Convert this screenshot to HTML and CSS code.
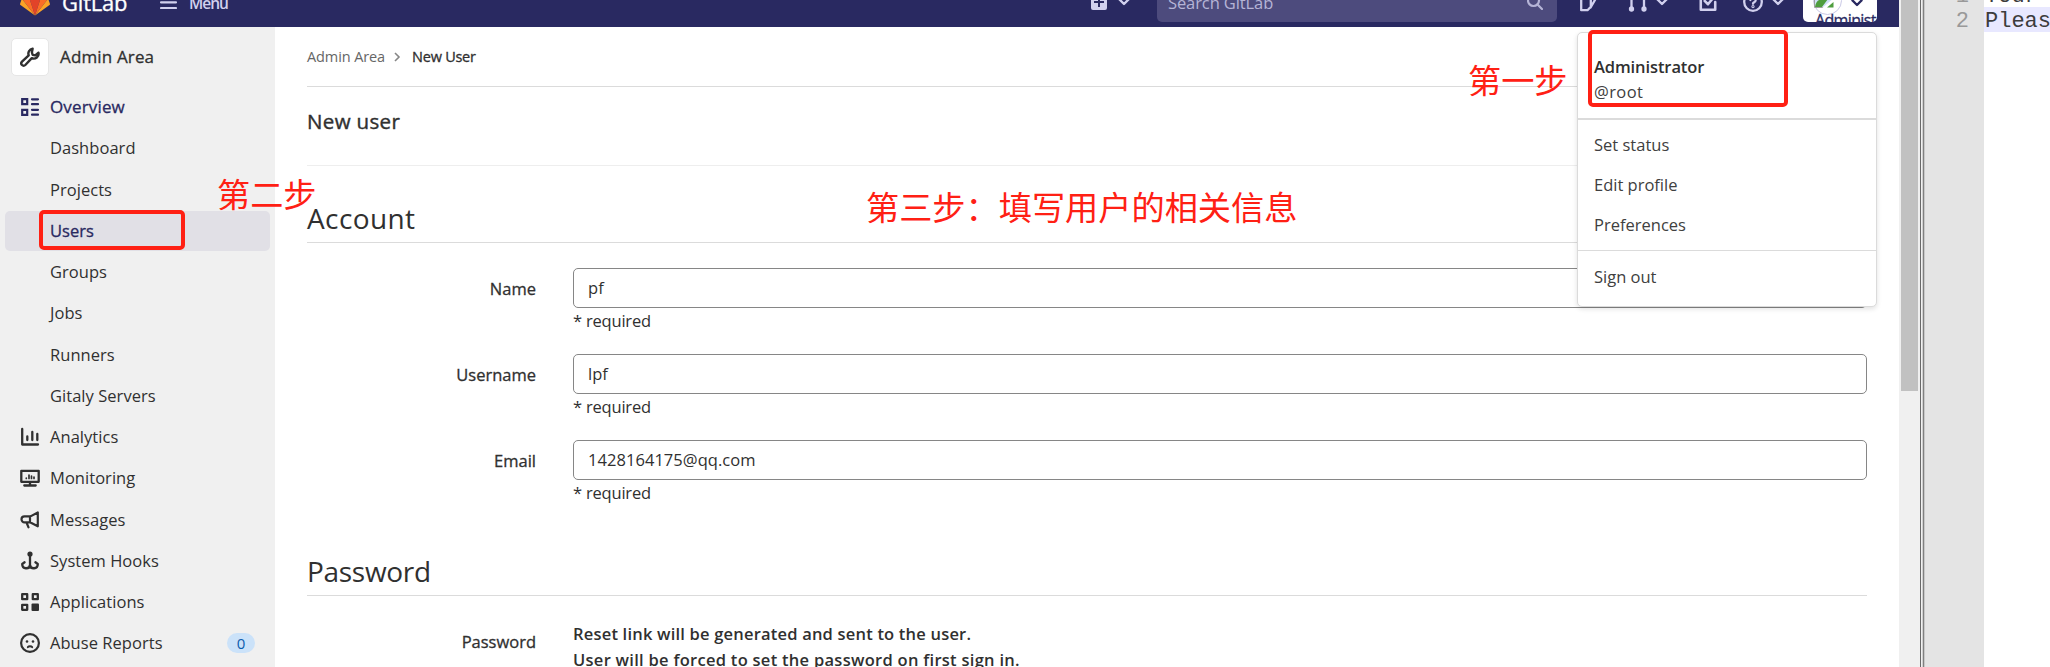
FILE: index.html
```
<!DOCTYPE html>
<html lang="en">
<head>
<meta charset="utf-8">
<title>New User · Admin Area · GitLab</title>
<link rel="stylesheet" href="styles.css">
</head>
<body>
<div class="app">
  <header class="topbar">
    <div class="topbar-inner">
      <svg class="logo" viewBox="0 0 30 28"><path fill="#e24329" d="M15 27.5 20.5 10.600h-11z"/><path fill="#fc6d26" d="M15 27.500 9.500 10.600H1.800zM15 27.500l5.500-16.900h7.700z"/><path fill="#fca326" d="M1.800 10.600.1 15.800a1.200 1.200 0 0 0 .4 1.300L15 27.500zM28.200 10.600l1.700 5.200a1.200 1.200 0 0 1-.4 1.300L15 27.500z"/><path fill="#e24329" d="M1.800 10.600h7.700L6.200.5c-.2-.5-.9-.5-1.100 0zM28.200 10.600h-7.700L23.800.5c.2-.5.900-.5 1.100 0z"/></svg>
      <span class="brand">GitLab</span>
      <svg class="burger" viewBox="0 0 17 15"><path d="M1 1.500h15M1 7.300h15M1 13h15" stroke="#d1d0ee" stroke-width="2.200" stroke-linecap="round"/></svg>
      <span class="menu-label">Menu</span>
      <svg class="ic plus" viewBox="0 0 16 16"><path fill="#d1d0ee" fill-rule="evenodd" d="M2 0h12a2 2 0 0 1 2 2v12a2 2 0 0 1-2 2H2a2 2 0 0 1-2-2V2a2 2 0 0 1 2-2zm5 3v4H3v2h4v4h2V9h4V7H9V3z"/></svg>
      <svg class="chev chev-a" viewBox="0 0 12 8"><path d="m1.500 1.500 4.500 4.500 4.500-4.500"/></svg>
      <div class="search"><span>Search GitLab</span>
        <svg class="ic glass" viewBox="0 0 16 16"><circle cx="6.500" cy="6.500" r="5.500"/><path d="m10.500 10.500 4.500 4.500"/></svg>
      </div>
      <svg class="nav-ic issues" viewBox="0 0 20 20"><path d="M2.200 3.200h9.600v11.500l-3.300 3.500H2.200zM12 4.200l4.800 2.300-5.200 9"/></svg>
      <svg class="nav-ic mr" viewBox="0 0 20 20"><circle cx="3.500" cy="3.500" r="2"/><path d="M3.500 6v12M16 18V7.500a3 3 0 0 0-3-3h-3"/><circle cx="16" cy="17" r="1.500"/><circle cx="3.500" cy="17" r="1.500"/></svg>
      <svg class="chev chev-b" viewBox="0 0 12 8"><path d="m1.500 1.500 4.500 4.500 4.500-4.500"/></svg>
      <svg class="nav-ic todo" viewBox="0 0 18 18"><path d="M9 2H2.500v14h13V9M6 8l3 3 6.500-8"/></svg>
      <svg class="nav-ic help" viewBox="0 0 20 20"><circle cx="10" cy="10" r="8.800"/><path d="M7.400 8a2.600 2.600 0 1 1 3.600 2.400c-.7.300-1 .7-1 1.400"/><circle cx="10" cy="14.600" r=".5"/></svg>
      <svg class="chev chev-c" viewBox="0 0 12 8"><path d="m1.500 1.500 4.500 4.500 4.500-4.500"/></svg>
      <div class="user-btn">
        <div class="avatar">
          <svg viewBox="0 0 29 29"><circle cx="14.500" cy="14.500" r="14" fill="#fff" stroke="#c9c8e6"/><path d="M1.500 1.500h19v20H1.500z" fill="#cfe0f7" stroke="#a0a0a0"/><path d="M2 21c1-6 4-8 7-7 2-3 5-3 6-1l-6 8z" fill="#4f9e3e"/><path d="m8 23 13-11v11z" fill="#fff"/><path d="M14 21.500h6.500V16z" fill="#4f9e3e"/></svg>
          <span class="alt">Administ</span>
        </div>
        <svg class="chev chev-d" viewBox="0 0 12 8"><path d="m1.500 1.500 4.500 4.500 4.500-4.500"/></svg>
      </div>
    </div>
  </header>
  <div class="page">
    <nav class="sidebar">
      <div class="context"><span class="context-ic"><svg viewBox="0 0 20 20"><path fill="none" stroke="#303030" stroke-width="2.400" stroke-linejoin="round" d="M12.600 1.700a4.900 4.900 0 0 0-3.900 6.600L2 14.700a2.300 2.300 0 0 0 3.300 3.300l6.500-6.800a4.900 4.900 0 0 0 6.700-5.500l-3.300 2.700-2.600-.6-.7-2.600z"/></svg></span><span>Admin Area</span></div>
      <ul class="nav">
        <li class="on top"><svg viewBox="0 0 20 20"><g fill="none" stroke="#292961" stroke-width="2.200"><path d="M2.200 2.200h5v5h-5zM2.200 12.800h5v5h-5z"/><path stroke-linecap="round" d="M12 2.300h6M12 7.200h6M12 12.800h6M12 17.700h6"/></g></svg>Overview</li>
        <li class="sub">Dashboard</li>
        <li class="sub">Projects</li>
        <li class="sub on active">Users</li>
        <li class="sub">Groups</li>
        <li class="sub">Jobs</li>
        <li class="sub">Runners</li>
        <li class="sub">Gitaly Servers</li>
        <li><svg viewBox="0 0 20 20"><path fill="none" stroke="#303030" stroke-width="2.300" stroke-linecap="round" stroke-linejoin="round" d="M2.200 2v15.500H18M7.300 9.500v3.500M12.300 5v8M17.300 7v6"/></svg>Analytics</li>
        <li><svg viewBox="0 0 20 20"><g fill="none" stroke="#303030" stroke-width="2.300" stroke-linecap="round" stroke-linejoin="round"><path d="M1.300 2.800h17.400v11H1.300zM10 14v3.500M4.300 17.500h11.400"/><path stroke-width="1.700" d="M6.300 10v.4M9 7v3.400M11.500 8v2.400M14 9v1.400"/></g></svg>Monitoring</li>
        <li><svg viewBox="0 0 20 20"><path fill="none" stroke="#303030" stroke-width="2.200" stroke-linecap="round" stroke-linejoin="round" d="M17.800 2.500v13.800L10 12.200V6.600zM10 6.300H4.500a2.500 2.500 0 0 0 0 6H10M6.500 12.500l2 4.800"/></svg>Messages</li>
        <li><svg viewBox="0 0 20 20"><circle cx="10" cy="3" r="2.600" fill="#303030"/><path fill="none" stroke="#303030" stroke-width="2.300" stroke-linecap="round" stroke-linejoin="round" d="M10 4v12.500M4.600 11.300 2.200 13c0 5.500 7.300 5.500 7.800 1 .5 4.500 7.800 4.500 7.800-1l-2.400-1.700"/></svg>System Hooks</li>
        <li><svg viewBox="0 0 20 20"><path fill="none" stroke="#303030" stroke-width="2.300" stroke-linejoin="round" d="M2.200 2.200h5v5h-5zM12.800 2.200h5v5h-5zM2.200 12.800h5v5h-5z"/><rect x="11.500" y="11.500" width="7.500" height="7.500" rx="1" fill="#303030"/></svg>Applications</li>
        <li><svg viewBox="0 0 20 20"><circle cx="10" cy="10" r="8.900" fill="none" stroke="#303030" stroke-width="2.200"/><circle cx="7" cy="8.500" r="1.300" fill="#303030"/><circle cx="13" cy="8.500" r="1.300" fill="#303030"/><path fill="none" stroke="#303030" stroke-width="1.900" stroke-linecap="round" d="M7.800 14.200c1-1.300 3.400-1.300 4.400 0"/></svg>Abuse Reports<span class="badge">0</span></li>
      </ul>
    </nav>
    <main class="content">
      <div class="crumbs"><span>Admin Area</span><svg viewBox="0 0 8 10"><path d="m2 1 4 4-4 4" fill="none" stroke="#868686" stroke-width="1.600"/></svg><b>New User</b></div>
      <h3 class="title">New user</h3>
      <h2 class="legend">Account</h2>
      <div class="field"><label>Name</label><div><div class="input">pf</div><p>* required</p></div></div>
      <div class="field"><label>Username</label><div><div class="input">lpf</div><p>* required</p></div></div>
      <div class="field"><label>Email</label><div><div class="input">1428164175@qq.com</div><p>* required</p></div></div>
      <h2 class="legend second">Password</h2>
      <div class="field"><label>Password</label><div class="note"><div>Reset link will be generated and sent to the user.</div><div class="note-b">User will be forced to set the password on first sign in.</div></div></div>
    </main>
  </div>
  <div class="dropdown">
    <div class="who"><b>Administrator</b><span>@root</span></div>
    <div class="group"><span>Set status</span><span>Edit profile</span><span>Preferences</span></div>
    <div class="group last"><span>Sign out</span></div>
  </div>
</div>
<div class="scrollbar"><div class="thumb"></div></div>
<div class="splitter"></div>
<div class="editor">
  <div class="gutter"><div>1</div><div>2</div></div>
  <div class="code"><div>Your </div><div class="current">Pleas</div></div>
</div>
<div class="mark box-admin"></div>
<div class="mark box-users"></div>
<div class="step step-one">第一步</div>
<div class="step step-two">第二步</div>
<div class="step step-three">第三步：填写用户的相关信息</div>
</body>
</html>
```
FILE: styles.css
```
* { box-sizing: border-box; }
html { overflow: hidden; }
body {
  margin: 0; width: 2050px; height: 667px; overflow: hidden; display: flex; position: relative;
  font: 17px/24px "Open Sans", "Noto Sans", sans-serif; color: #303030; background: #fff;
}
svg { display: block; flex: none; }
h2, h3, p, ul { margin: 0; padding: 0; font-weight: 400; }
.app { width: 1899px; height: 667px; position: relative; overflow: hidden; }

.topbar { height: 27px; background: #292961; overflow: hidden; }
.topbar-inner { height: 50px; margin-top: -23px; padding-left: 20px; display: flex; align-items: center; color: #d1d0ee; }
.logo { width: 30px; height: 28px; }
.brand { color: #fff; font-size: 22px; letter-spacing: -.2px; margin-left: 12px; width: 66px; -webkit-text-stroke: .3px #fff; }
.burger { width: 17px; height: 15px; margin-left: 32px; }
.menu-label { font-weight: 600; font-size: 15.500px; margin-left: 12px; width: 51px; letter-spacing: -1px; padding-top: 1px; }
.ic { width: 16px; height: 16px; }
.plus { margin-left: 851px; }
.chev { width: 12px; height: 8px; fill: none; stroke: #d1d0ee; stroke-width: 2.400; stroke-linecap: round; stroke-linejoin: round; }
.chev-a { margin-left: 11px; }
.search { width: 400px; height: 40px; margin-left: 27px; padding: 2px 14px 0 11px; border-radius: 5px; background: #4d4b7d; color: #b5b4d6; display: flex; align-items: center; justify-content: space-between; font-size: 16.500px; letter-spacing: -.1px; }
.glass { fill: none; stroke: #b5b4d6; stroke-width: 2.200; stroke-linecap: round; margin-top: -3px; }
.nav-ic { width: 20px; height: 20px; fill: none; stroke: #d1d0ee; stroke-width: 2.300; stroke-linecap: round; stroke-linejoin: round; }
.issues { margin-left: 22px; }
.mr { margin-left: 29px; }
.chev-b { margin-left: 8px; }
.todo { margin-left: 30px; }
.help { margin-left: 25px; }
.chev-c { margin-left: 9px; }
.user-btn { width: 74px; height: 40px; margin-left: 19px; background: #fff; border-radius: 5px; overflow: hidden; display: flex; padding: 4px 0 0 10px; position: relative; }
.avatar { width: 64px; height: 50px; overflow: hidden; color: #292961; }
.avatar svg { width: 29px; height: 29px; }
.alt { display: block; font-size: 16px; line-height: 20px; margin: -5px 0 0 2px; letter-spacing: -.65px; -webkit-text-stroke: .3px #292961; }
.chev-d { position: absolute; left: 48px; top: 17px; stroke: #292961; }

.page { display: flex; height: 640px; }
.sidebar { width: 275px; background: #f0f0f0; padding: 11px 5px 0; }
.context { display: flex; align-items: center; gap: 11px; height: 38px; margin-left: 6px; font-size: 17px; -webkit-text-stroke: .3px #303030; letter-spacing: .15px; }
.context-ic { width: 38px; height: 38px; background: #fff; border-radius: 5px; border: 1px solid #e6e6e6; display: grid; place-items: center; }
.context-ic svg { width: 20px; height: 20px; }
.nav { list-style: none; padding-top: 11px; }
.nav li { height: 40px; margin-bottom: 1.250px; padding-left: 15px; display: flex; align-items: center; border-radius: 5px; font-size: 16.500px; letter-spacing: .04px; }
.nav li svg { width: 20px; height: 20px; margin-right: 10px; }
.nav .sub { padding-left: 45px; }
.nav .on { color: #292961; -webkit-text-stroke: .3px #292961; }
.nav .top { font-size: 17px; letter-spacing: .15px; }
.nav .active { background: #e1e0e6; }
.badge { margin-left: auto; margin-right: 15px; width: 28px; height: 20px; border-radius: 10px; background: #cbe2f9; color: #0b5cad; font-size: 15px; line-height: 20px; text-align: center; }

.content { width: 1560px; margin-left: 32px; }
.crumbs { height: 60px; border-bottom: 1px solid #dbdbdb; display: flex; align-items: center; font-size: 14.500px; letter-spacing: -.1px; color: #666; }
.crumbs svg { width: 8px; height: 10px; margin: 0 11px 0 8px; }
.crumbs b { font-weight: 400; letter-spacing: -.25px; color: #303030; -webkit-text-stroke: .3px #303030; }
.title { height: 79px; padding-top: 20px; border-bottom: 1px solid #eee; font-size: 20.500px; line-height: 28px; letter-spacing: .35px; -webkit-text-stroke: .4px #303030; }
.legend { height: 77px; padding-top: 34px; border-bottom: 1px solid #dbdbdb; font-size: 28px; line-height: 36px; letter-spacing: .4px; }
.second { height: 64px; padding-top: 21px; margin-top: 6px; letter-spacing: -.3px; }
.field { display: flex; height: 86px; }
.legend + .field { margin-top: 25px; }
.field label { width: 229px; margin-right: 37px; text-align: right; line-height: 42px; font-size: 16.500px; -webkit-text-stroke: .3px #303030; }
.field > div { flex: 1; }
.input { height: 40px; border: 1.250px solid #868686; border-radius: 5px; padding-left: 14px; line-height: 37px; font-size: 16.500px; letter-spacing: .05px; }
.field p { font-size: 16.500px; line-height: 26px; letter-spacing: -.2px; }
.note { font-weight: 600; font-size: 16.500px; line-height: 26px; letter-spacing: .2px; }
.note-b { letter-spacing: .28px; }

.dropdown { position: absolute; left: 1577px; top: 32px; width: 300px; height: 275px; background: #fff; border: 1px solid #dbdbdb; border-radius: 5px; box-shadow: 0 2px 5px rgba(0,0,0,.12); font-size: 16.500px; color: #404040; }
.who { height: 87px; border-bottom: 2px solid #dbdbdb; padding: 21px 16px 0; display: flex; flex-direction: column; line-height: 25px; }
.who b { font-weight: 600; letter-spacing: -.1px; color: #303030; }
.who span { letter-spacing: .4px; }
.group { display: flex; flex-direction: column; padding: 5px 16px; border-bottom: 1px solid #dbdbdb; line-height: 40px; }
.last { border: 0; padding-top: 6px; }

.scrollbar { width: 21px; background: #f0f0f0; padding-left: 2px; }
.thumb { width: 17px; height: 391px; background: #c1c1c1; }
.splitter { width: 5px; background: linear-gradient(90deg, #696969 0 1px, #f0f0f0 1px 2px, #d0d0d0 2px 3px, #808080 3px 4px, #c8c8c8 4px 5px); }
.editor { display: flex; width: 125px; font: 22px/29px "Liberation Mono", monospace; background: #fff; overflow: hidden; }
.gutter { width: 59px; background: #e4e4e4; color: #999; text-align: right; padding-right: 15px; }
.gutter div { height: 25px; }
.gutter div:first-child, .code div:first-child { margin-top: -18px; }
.code { width: 66px; overflow: hidden; white-space: pre; color: #3c3c3c; }
.code div { height: 25px; padding-left: 1px; }
.code .current { background: #e8e8ff; }

.mark { position: absolute; border: 4px solid #ff2014; border-radius: 5px; }
.box-admin { left: 1588px; top: 30px; width: 200px; height: 77px; }
.box-users { left: 39px; top: 210px; width: 146px; height: 40px; }
.step { position: absolute; color: #ff2014; font: 33.200px/40px "Noto Sans CJK SC", sans-serif; white-space: nowrap; }
.step-one { left: 1468px; top: 59px; }
.step-two { left: 217px; top: 173px; }
.step-three { left: 866px; top: 186px; }
```
